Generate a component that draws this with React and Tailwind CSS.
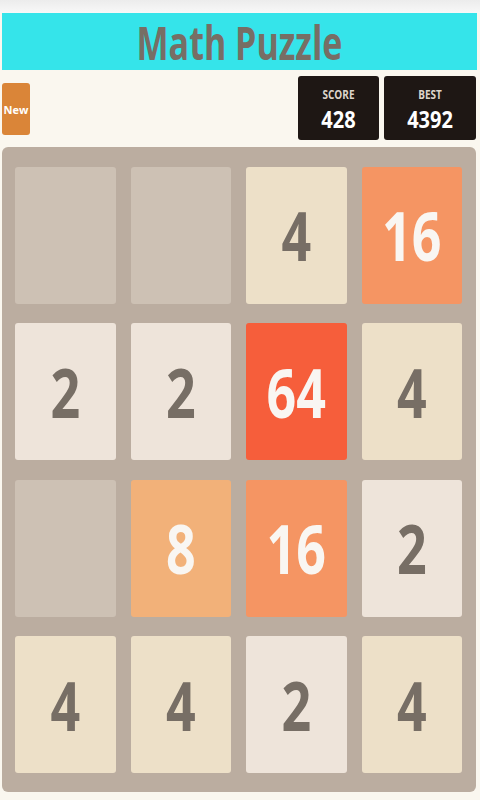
import React from "react";

const tiles = [
  [0, 0, 4, 16],
  [2, 2, 64, 4],
  [0, 8, 16, 2],
  [4, 4, 2, 4],
];

const style = {
  0: "bg-[#cdc1b4]",
  2: "bg-[#eee4da] text-[#776e65]",
  4: "bg-[#ede0c8] text-[#776e65]",
  8: "bg-[#f2b179] text-[#f9f6f2]",
  16: "bg-[#f59563] text-[#f9f6f2]",
  64: "bg-[#f65e3b] text-[#f9f6f2]",
};

export default function App() {
  return (
    <div className="w-[480px] h-[800px] bg-[#faf7ef] flex flex-col overflow-hidden" style={{ fontFamily: '"Open Sans", "Liberation Sans", sans-serif' }}>
      <div className="h-[13px] bg-gradient-to-b from-[#ececec] to-[#f8f8f8]" />
      <div className="ml-[2px] mr-[3px] h-[57px] bg-[#35e4ea] flex items-center justify-center">
        <span className="text-[34px] font-bold text-[#776e65] leading-none scale-y-[1.35]">Math Puzzle</span>
      </div>
      <div className="h-[77px] flex items-start pl-[2px] pr-[4px] pt-[6px]">
        <div className="mt-[7px] w-[28px] h-[52px] rounded-[3px] bg-[#da8538] flex items-center justify-center">
          <span className="text-[11px] font-bold text-white leading-none">New</span>
        </div>
        <div className="flex-1" />
        <div className="flex gap-[5px]">
          <div className="w-[81px] h-[64px] rounded-[3px] bg-[#1e1714] flex flex-col items-center pt-[13px]">
            <span className="text-[10px] font-bold text-[#ddd4ca] leading-none scale-y-[1.2]">SCORE</span>
            <span className="mt-[11px] text-[20px] font-bold text-white leading-none scale-y-[1.2]">428</span>
          </div>
          <div className="w-[92px] h-[64px] rounded-[3px] bg-[#1e1714] flex flex-col items-center pt-[13px]">
            <span className="text-[10px] font-bold text-[#ddd4ca] leading-none scale-y-[1.2]">BEST</span>
            <span className="mt-[11px] text-[20px] font-bold text-white leading-none scale-y-[1.2]">4392</span>
          </div>
        </div>
      </div>
      <div className="ml-[2px] w-[474px] h-[645px] rounded-[6px] bg-[#bbada0] grid grid-cols-4 grid-rows-4 pl-[13px] pr-[14px] pt-[20px] pb-[19px] gap-x-[15px] gap-y-[19.5px]">
        {tiles.flat().map((v, i) => (
          <div key={i} className={`rounded-[3px] flex items-center justify-center ${style[v]}`}>
            {v !== 0 && (
              <span className="text-[52px] font-bold leading-none scale-y-[1.3]">{v}</span>
            )}
          </div>
        ))}
      </div>
    </div>
  );
}
